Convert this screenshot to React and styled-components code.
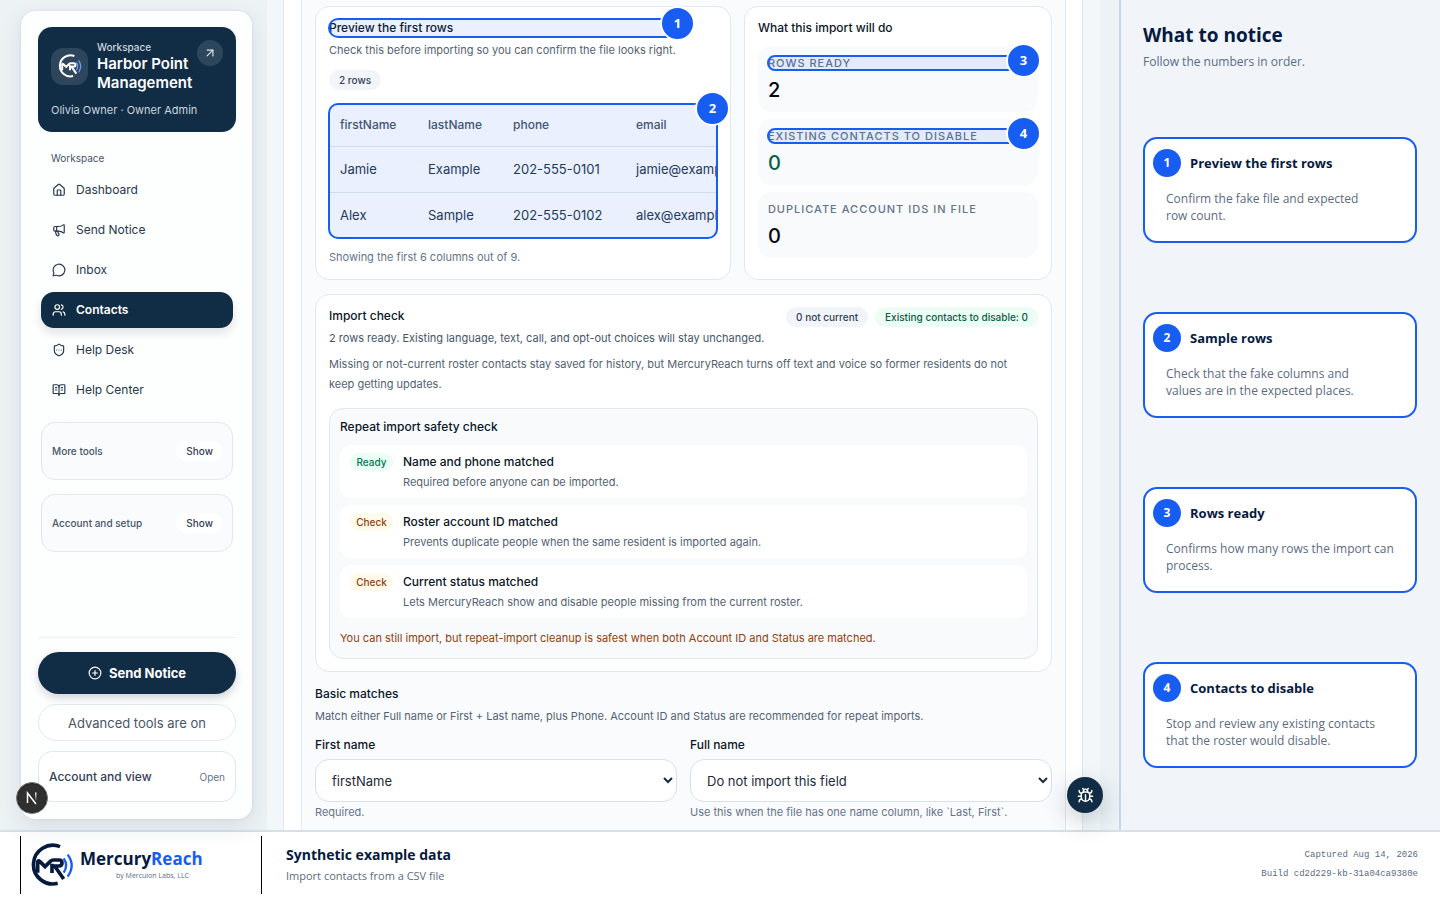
import React, { useState } from 'react';
import styled, { createGlobalStyle } from 'styled-components';
import {
  ArrowUpRight,
  BookOpenText,
  Bug,
  CirclePlus,
  House,
  Megaphone,
  MessageCircle,
  ShieldEllipsis,
  Users,
} from 'lucide-react';

const navy = '#112d45';
const blue = '#185df2';
const line = '#e2e8f0';
const guideFont = "'Open Sans', 'Noto Sans', sans-serif";

const GlobalStyle = createGlobalStyle`
  * {
    box-sizing: border-box;
  }
  body {
    margin: 0;
    font-family: Inter, sans-serif;
    font-size: 11px;
    line-height: 20px;
    color: #0b1628;
  }
  h1, h2, h3, p, ul, ol {
    margin: 0;
    padding: 0;
    list-style: none;
  }
  button, select {
    font-family: inherit;
    cursor: pointer;
  }
`;

const Page = styled.div`
  display: flex;
  flex-direction: column;
  height: 100vh;
  overflow: hidden;
`;

const Stage = styled.div`
  flex: 1;
  min-height: 0;
  display: flex;
  background: #edf2f5;
`;

/* sidebar */

const Sidebar = styled.aside`
  position: relative;
  width: 267px;
  flex-shrink: 0;
  padding: 11px 15px 11px 21px;
`;

const SidebarCard = styled.div`
  display: flex;
  flex-direction: column;
  height: 100%;
  padding: 16px 16px 17px 17px;
  border-radius: 14px;
  background: #fdfefe;
  box-shadow: 0 8px 24px rgba(15, 42, 67, 0.1), 0 0 2px rgba(15, 42, 67, 0.15);
`;

const Workspace = styled.div`
  padding: 13px;
  border-radius: 14px;
  background: ${navy};
  color: #fff;
`;

const WorkspaceTop = styled.div`
  display: flex;
  align-items: center;
`;

const LogoTile = styled.div`
  display: grid;
  place-items: center;
  width: 37px;
  height: 37px;
  margin-right: 9px;
  border-radius: 12px;
  background: rgba(255, 255, 255, 0.12);
`;

const WorkspaceName = styled.div`
  flex: 1;
  font-size: 15px;
  font-weight: 600;
  line-height: 19px;
`;

const Eyebrow = styled.div`
  font-size: 10px;
  font-weight: 500;
  line-height: 14px;
  color: #cbd5df;
`;

const RoundLink = styled.a`
  display: grid;
  place-items: center;
  align-self: flex-start;
  width: 26px;
  height: 26px;
  border-radius: 50%;
  background: rgba(255, 255, 255, 0.12);
  color: #dde5ec;
`;

const WorkspaceUser = styled.p`
  margin-top: 9px;
  font-size: 11px;
  line-height: 18px;
  color: #cbd5df;
`;

const NavLabel = styled.p`
  margin: 18px 13px 6px;
  font-size: 10px;
  line-height: 16px;
  color: #475569;
`;

const Nav = styled.nav`
  display: flex;
  flex-direction: column;
  gap: 4px;
  padding: 0 3px;
`;

const NavItem = styled.a`
  display: flex;
  align-items: center;
  gap: 10px;
  height: 36px;
  padding: 0 11px;
  border-radius: 13px;
  font-size: 12px;
  font-weight: ${({ $active }) => ($active ? 600 : 400)};
  text-decoration: none;
  color: ${({ $active }) => ($active ? '#fff' : '#26384d')};
  background: ${({ $active }) => ($active ? navy : 'transparent')};
  box-shadow: ${({ $active }) => ($active ? '0 5px 10px rgba(15, 23, 42, 0.12)' : 'none')};
`;

const ToolBox = styled.div`
  display: flex;
  align-items: center;
  justify-content: space-between;
  height: 58px;
  margin: 14px 3px 0;
  padding: 0 9px 0 10px;
  border: 1px solid ${line};
  border-radius: 14px;
  background: #fafbfd;
  font-size: 10px;
  font-weight: 500;
  color: #475569;
`;

const ShowButton = styled.button`
  height: 20px;
  padding: 0 10px;
  border: none;
  border-radius: 10px;
  background: #fff;
  font-size: 10px;
  font-weight: 500;
  color: #334155;
`;

const SidebarFooter = styled.div`
  display: flex;
  flex-direction: column;
  gap: 10px;
  margin-top: auto;
  padding-top: 14px;
  border-top: 1px solid #edf1f5;
`;

const SendButton = styled.button`
  display: flex;
  align-items: center;
  justify-content: center;
  gap: 7px;
  height: 42px;
  border: none;
  border-radius: 21px;
  background: ${navy};
  box-shadow: 0 4px 8px rgba(15, 23, 42, 0.18);
  font-size: 13px;
  font-weight: 700;
  color: #fff;
`;

const AdvancedButton = styled.button`
  height: 37px;
  border: 1px solid ${line};
  border-radius: 19px;
  background: #fff;
  font-size: 13px;
  color: #475569;
`;

const AccountButton = styled.button`
  display: flex;
  align-items: center;
  justify-content: space-between;
  height: 51px;
  padding: 0 10px;
  border: 1px solid ${line};
  border-radius: 14px;
  background: #fff;
  font-size: 12px;
  font-weight: 500;
  color: #334155;
`;

const Muted = styled.span`
  font-size: 10px;
  font-weight: 400;
  color: #64748b;
`;

const DevBadge = styled.button`
  position: absolute;
  left: 16px;
  bottom: 16px;
  width: 32px;
  height: 32px;
  padding: 0;
  border: 1px solid #777;
  border-radius: 50%;
  background: #2f2f2f;
  box-shadow: 0 0 0 1px #222 inset;
`;

/* main column */

const Main = styled.main`
  position: relative;
  flex: 1;
  min-width: 0;
  display: flex;
  margin-right: 19px;
  padding: 0 17px 0 16px;
  background: #f3f7f9;
`;

const Sheet = styled.div`
  flex: 1;
  min-width: 0;
  display: flex;
  padding: 0 16px 0 17px;
  border: solid ${line};
  border-width: 0 1px;
  background: #fff;
`;

const Panel = styled.div`
  flex: 1;
  min-width: 0;
  padding: 6px 13px 0;
  border: solid ${line};
  border-width: 0 1px;
  background: #fafbfd;
`;

const TopRow = styled.div`
  display: grid;
  grid-template-columns: minmax(0, 1.35fr) minmax(0, 1fr);
  gap: 13px;
`;

const Card = styled.section`
  padding: 12px 13px;
  border: 1px solid ${line};
  border-radius: 14px;
  background: #fff;
`;

const Title = styled.h3`
  font-size: 12px;
  font-weight: 500;
  line-height: 18px;
`;

const Text = styled.p`
  margin-top: ${({ $lead }) => ($lead ? '3px' : '0')};
  color: ${({ $color }) => $color || '#536273'};
`;

const Note = styled(Text)`
  max-width: 700px;
`;

const Pill = styled.span`
  display: inline-block;
  padding: 0 10px;
  border-radius: 10px;
  background: ${({ $green }) => ($green ? '#ebfdf4' : '#f1f5f9')};
  font-size: 10px;
  font-weight: 500;
  line-height: 20px;
  color: ${({ $green }) => ($green ? '#065f46' : '#334155')};
`;

const Intro = styled.div`
  display: inline-block;
  min-width: 353px;
  margin-bottom: 10px;
`;

const Marked = styled.div`
  position: relative;
  &::after {
    content: '';
    position: absolute;
    inset: -1px;
    border: 2px solid ${blue};
    border-radius: 10px;
    background: rgba(24, 93, 242, 0.09);
    pointer-events: none;
  }
`;

const Marker = styled.span`
  position: absolute;
  z-index: 1;
  top: -13px;
  right: -13px;
  width: 35px;
  height: 35px;
  border: 2px solid #fff;
  border-radius: 50%;
  background: ${blue};
  font-family: ${guideFont};
  font-size: 13px;
  font-weight: 700;
  line-height: 31px;
  text-align: center;
  color: #fff;
`;

const TableClip = styled.div`
  overflow: hidden;
  border-radius: 10px;
`;

const Table = styled.table`
  width: 480px;
  table-layout: fixed;
  border-collapse: collapse;
  color: #26384d;
`;

const Th = styled.th`
  width: ${({ $width }) => $width || 'auto'};
  height: 42px;
  padding: 0 11px;
  font-size: 12px;
  font-weight: 500;
  text-align: left;
  color: #475569;
`;

const Td = styled.td`
  height: 46px;
  padding: 0 11px;
  border-top: 1px solid ${line};
  font-size: 13px;
`;

const TableBox = styled(Marked)`
  margin: 14px 0 9px;
`;

const Stats = styled.div`
  display: grid;
  gap: 7px;
  margin-top: 9px;
`;

const Stat = styled.div`
  padding: 10px;
  border-radius: 14px;
  background: #f8fafc;
`;

const StatLabel = styled.div`
  font-size: 11px;
  font-weight: 500;
  line-height: 14px;
  letter-spacing: 1px;
  text-transform: uppercase;
  color: #64748b;
`;

const StatValue = styled.div`
  margin-top: 8px;
  font-size: 20px;
  font-weight: 500;
  line-height: 24px;
  color: ${({ $green }) => ($green ? '#065f46' : '#020617')};
`;

const CheckCard = styled(Card)`
  margin: 14px 0 13px;
`;

const CheckHead = styled.div`
  display: flex;
  justify-content: space-between;
  align-items: flex-start;
  margin-bottom: 6px;
`;

const Pills = styled.div`
  display: flex;
  gap: 7px;
`;

const SafetyBox = styled.div`
  margin-top: 14px;
  padding: 9px 10px 10px;
  border: 1px solid ${line};
  border-radius: 14px;
  background: #f8fafc;
`;

const Checks = styled.ul`
  display: grid;
  gap: 7px;
  margin: 9px 0 10px;
`;

const CheckItem = styled.li`
  display: flex;
  align-items: flex-start;
  gap: 10px;
  padding: 7px 10px 6px;
  border-radius: 10px;
  background: #fff;
`;

const CheckName = styled.h4`
  margin: 0;
  font-size: 12px;
  font-weight: 500;
`;

const Status = styled.span`
  width: 43px;
  margin-top: 1px;
  border-radius: 9px;
  background: ${({ $ok }) => ($ok ? '#ebfdf4' : '#fffbeb')};
  font-size: 10px;
  font-weight: 500;
  line-height: 18px;
  text-align: center;
  color: ${({ $ok }) => ($ok ? '#047857' : '#92400e')};
`;

const Fields = styled.div`
  display: grid;
  grid-template-columns: 1fr 1fr;
  gap: 13px;
  margin-top: 9px;
`;

const Label = styled.label`
  display: block;
  margin-bottom: 4px;
  font-size: 12px;
  font-weight: 500;
`;

const Select = styled.select`
  display: block;
  width: 100%;
  height: 43px;
  padding: 0 12px;
  border: 1px solid #d9e1ea;
  border-radius: 14px;
  background: #fff;
  font-size: 13px;
  color: #1e293b;
`;

const BugButton = styled.button`
  position: absolute;
  right: -3px;
  bottom: 17px;
  display: grid;
  place-items: center;
  width: 36px;
  height: 36px;
  padding: 0;
  border: none;
  border-radius: 50%;
  background: ${navy};
  box-shadow: 0 8px 24px rgba(15, 42, 67, 0.25);
  color: #fff;
`;

/* guide column */

const Guide = styled.aside`
  display: flex;
  flex-direction: column;
  width: 321px;
  flex-shrink: 0;
  padding: 20px 23px 28px 22px;
  border-left: 2px solid #c8d6e5;
  background: #f1f5fa;
  font-family: ${guideFont};
  color: #061a40;
`;

const GuideTitle = styled.h2`
  font-size: 19px;
  font-weight: 700;
  line-height: 30px;
`;

const GuideLead = styled.p`
  margin: 3px 0 31px;
  font-size: 12px;
  line-height: 18px;
  color: #5b6b82;
`;

const Steps = styled.ol`
  flex: 1;
  display: grid;
  grid-auto-rows: 1fr;
  align-items: center;
`;

const Step = styled.li`
  height: 106px;
  padding: 10px 8px;
  border: 2px solid ${blue};
  border-radius: 14px;
  background: #fff;
`;

const StepHead = styled.div`
  display: flex;
  align-items: center;
  gap: 9px;
`;

const StepNumber = styled.span`
  width: 28px;
  border-radius: 50%;
  background: ${blue};
  font-size: 12px;
  font-weight: 700;
  line-height: 28px;
  text-align: center;
  color: #fff;
`;

const StepTitle = styled.h3`
  font-size: 13px;
  font-weight: 700;
`;

const StepText = styled.p`
  margin: 13px 0 0 13px;
  font-size: 12px;
  line-height: 17px;
  white-space: pre-line;
  color: #5b6b82;
`;

/* bottom bar */

const Footer = styled.footer`
  display: flex;
  align-items: center;
  height: 70px;
  flex-shrink: 0;
  padding: 0 22px 2px 20px;
  border-top: 2px solid #d5e0e9;
  background: #fff;
  font-family: ${guideFont};
`;

const Brand = styled.div`
  display: flex;
  align-items: center;
  gap: 6px;
  width: 242px;
  height: 58px;
  margin-right: 24px;
  padding-left: 9px;
  border: solid #000;
  border-width: 0 1px;
`;

const BrandName = styled.div`
  font-size: 17px;
  font-weight: 700;
  line-height: 22px;
  color: #061a40;
  span {
    color: ${blue};
  }
`;

const Byline = styled.div`
  padding-left: 36px;
  font-size: 7px;
  line-height: 12px;
  color: #5b6b82;
`;

const Caption = styled.div`
  flex: 1;
  font-size: 11px;
  color: #5b6b82;
`;

const CaptionTitle = styled.h1`
  font-size: 14px;
  font-weight: 700;
  line-height: 22px;
  color: #061a40;
`;

const Build = styled.div`
  font-family: 'Liberation Mono', monospace;
  font-size: 9px;
  line-height: 19px;
  text-align: right;
  color: #5b6b82;
`;

function Mark({ size, ink, wave }) {
  return (
    <svg width={size} height={size} viewBox="0 0 132 132" fill="none" stroke={ink} aria-hidden="true">
      <path d="M90 11A58 58 0 1 0 83 121" strokeWidth="11" />
      <path d="M23 89V59q0-9 7-3l15 15 16-16q4-4 9-4h17q9 0 9 9t-9 9H68M66 62v28M76 72l25 36" strokeWidth="11" />
      <path d="M101 46q15 21 0 43" stroke={wave} strokeWidth="7" />
      <path d="M113 35q24 32 0 66" stroke={wave} strokeWidth="7" />
    </svg>
  );
}

const nav = [
  { name: 'Dashboard', Icon: House },
  { name: 'Send Notice', Icon: Megaphone },
  { name: 'Inbox', Icon: MessageCircle },
  { name: 'Contacts', Icon: Users },
  { name: 'Help Desk', Icon: ShieldEllipsis },
  { name: 'Help Center', Icon: BookOpenText },
];

const contacts = [
  ['Jamie', 'Example', '202-555-0101', 'jamie@example.test'],
  ['Alex', 'Sample', '202-555-0102', 'alex@example.test'],
];

const checks = [
  { status: 'Ready', name: 'Name and phone matched', text: 'Required before anyone can be imported.' },
  {
    status: 'Check',
    name: 'Roster account ID matched',
    text: 'Prevents duplicate people when the same resident is imported again.',
  },
  {
    status: 'Check',
    name: 'Current status matched',
    text: 'Lets MercuryReach show and disable people missing from the current roster.',
  },
];

const steps = [
  { title: 'Preview the first rows', text: 'Confirm the fake file and expected\nrow count.' },
  { title: 'Sample rows', text: 'Check that the fake columns and\nvalues are in the expected places.' },
  { title: 'Rows ready', text: 'Confirms how many rows the import can\nprocess.' },
  { title: 'Contacts to disable', text: 'Stop and review any existing contacts\nthat the roster would disable.' },
];

function App() {
  const [page, setPage] = useState('Contacts');

  return (
    <Page>
      <GlobalStyle />
      <Stage>
        <Sidebar>
          <SidebarCard>
            <Workspace>
              <WorkspaceTop>
                <LogoTile>
                  <Mark size={24} ink="#fff" wave="#6f9bf5" />
                </LogoTile>
                <WorkspaceName>
                  <Eyebrow>Workspace</Eyebrow>
                  Harbor Point Management
                </WorkspaceName>
                <RoundLink href="#workspace" aria-label="Open workspace">
                  <ArrowUpRight size={14} />
                </RoundLink>
              </WorkspaceTop>
              <WorkspaceUser>Olivia Owner · Owner Admin</WorkspaceUser>
            </Workspace>
            <NavLabel>Workspace</NavLabel>
            <Nav>
              {nav.map(({ name, Icon }) => (
                <NavItem key={name} href="#nav" $active={name === page} onClick={() => setPage(name)}>
                  <Icon size={14} />
                  {name}
                </NavItem>
              ))}
            </Nav>
            <ToolBox>
              More tools
              <ShowButton>Show</ShowButton>
            </ToolBox>
            <ToolBox>
              Account and setup
              <ShowButton>Show</ShowButton>
            </ToolBox>
            <SidebarFooter>
              <SendButton>
                <CirclePlus size={14} />
                Send Notice
              </SendButton>
              <AdvancedButton>Advanced tools are on</AdvancedButton>
              <AccountButton>
                Account and view
                <Muted>Open</Muted>
              </AccountButton>
            </SidebarFooter>
          </SidebarCard>
          <DevBadge aria-label="Developer tools">
            <svg width="30" height="30" viewBox="0 0 30 30" fill="none" strokeWidth="1.5">
              <defs>
                <linearGradient id="fade" x1="0" y1="0" x2="0" y2="1">
                  <stop offset="0" stopColor="#fff" />
                  <stop offset="1" stopColor="#fff" stopOpacity="0.1" />
                </linearGradient>
              </defs>
              <path d="M10.5 20V10L19 21" stroke="#fff" />
              <rect x="18" y="9.5" width="1.5" height="8" fill="url(#fade)" />
            </svg>
          </DevBadge>
        </Sidebar>

        <Main>
          <Sheet>
            <Panel>
              <TopRow>
                <Card>
                  <Intro>
                    <Marked>
                      <Title>Preview the first rows</Title>
                      <Marker>1</Marker>
                    </Marked>
                    <Text $lead>Check this before importing so you can confirm the file looks right.</Text>
                  </Intro>
                  <div>
                    <Pill>2 rows</Pill>
                  </div>
                  <TableBox>
                    <TableClip>
                      <Table>
                        <thead>
                          <tr>
                            <Th $width="88px">firstName</Th>
                            <Th $width="85px">lastName</Th>
                            <Th $width="123px">phone</Th>
                            <Th>email</Th>
                          </tr>
                        </thead>
                        <tbody>
                          {contacts.map((row) => (
                            <tr key={row[0]}>
                              {row.map((cell) => (
                                <Td key={cell}>{cell}</Td>
                              ))}
                            </tr>
                          ))}
                        </tbody>
                      </Table>
                    </TableClip>
                    <Marker>2</Marker>
                  </TableBox>
                  <Text $color="#64748b">Showing the first 6 columns out of 9.</Text>
                </Card>
                <Card>
                  <Title>What this import will do</Title>
                  <Stats>
                    <Stat>
                      <Marked>
                        <StatLabel>Rows ready</StatLabel>
                        <Marker>3</Marker>
                      </Marked>
                      <StatValue>2</StatValue>
                    </Stat>
                    <Stat>
                      <Marked>
                        <StatLabel>Existing contacts to disable</StatLabel>
                        <Marker>4</Marker>
                      </Marked>
                      <StatValue $green>0</StatValue>
                    </Stat>
                    <Stat>
                      <StatLabel>Duplicate account IDs in file</StatLabel>
                      <StatValue>0</StatValue>
                    </Stat>
                  </Stats>
                </Card>
              </TopRow>

              <CheckCard>
                <CheckHead>
                  <div>
                    <Title>Import check</Title>
                    <Text $lead $color="#475569">
                      2 rows ready. Existing language, text, call, and opt-out choices will stay unchanged.
                    </Text>
                  </div>
                  <Pills>
                    <Pill>0 not current</Pill>
                    <Pill $green>Existing contacts to disable: 0</Pill>
                  </Pills>
                </CheckHead>
                <Note>
                  Missing or not-current roster contacts stay saved for history, but MercuryReach turns off text and
                  voice so former residents do not keep getting updates.
                </Note>
                <SafetyBox>
                  <Title>Repeat import safety check</Title>
                  <Checks>
                    {checks.map((check) => (
                      <CheckItem key={check.name}>
                        <Status $ok={check.status === 'Ready'}>{check.status}</Status>
                        <div>
                          <CheckName>{check.name}</CheckName>
                          <Text>{check.text}</Text>
                        </div>
                      </CheckItem>
                    ))}
                  </Checks>
                  <Text $color="#92400e">
                    You can still import, but repeat-import cleanup is safest when both Account ID and Status are
                    matched.
                  </Text>
                </SafetyBox>
              </CheckCard>

              <Title>Basic matches</Title>
              <Text $lead>
                Match either Full name or First + Last name, plus Phone. Account ID and Status are recommended for
                repeat imports.
              </Text>
              <Fields>
                <div>
                  <Label htmlFor="first-name">First name</Label>
                  <Select id="first-name">
                    <option>firstName</option>
                    <option>lastName</option>
                  </Select>
                  <Text $color="#64748b">Required.</Text>
                </div>
                <div>
                  <Label htmlFor="full-name">Full name</Label>
                  <Select id="full-name">
                    <option>Do not import this field</option>
                    <option>firstName</option>
                  </Select>
                  <Text $color="#64748b">Use this when the file has one name column, like `Last, First`.</Text>
                </div>
              </Fields>
            </Panel>
          </Sheet>
          <BugButton aria-label="Report a bug">
            <Bug size={17} />
          </BugButton>
        </Main>

        <Guide>
          <GuideTitle>What to notice</GuideTitle>
          <GuideLead>Follow the numbers in order.</GuideLead>
          <Steps>
            {steps.map((step, i) => (
              <Step key={step.title}>
                <StepHead>
                  <StepNumber>{i + 1}</StepNumber>
                  <StepTitle>{step.title}</StepTitle>
                </StepHead>
                <StepText>{step.text}</StepText>
              </Step>
            ))}
          </Steps>
        </Guide>
      </Stage>

      <Footer>
        <Brand>
          <Mark size={44} ink="#061a40" wave={blue} />
          <div>
            <BrandName>
              Mercury<span>Reach</span>
            </BrandName>
            <Byline>by Mercuion Labs, LLC</Byline>
          </div>
        </Brand>
        <Caption>
          <CaptionTitle>Synthetic example data</CaptionTitle>
          Import contacts from a CSV file
        </Caption>
        <Build>
          Captured Aug 14, 2026
          <br />
          Build cd2d229-kb-31a04ca9380e
        </Build>
      </Footer>
    </Page>
  );
}

export default App;
